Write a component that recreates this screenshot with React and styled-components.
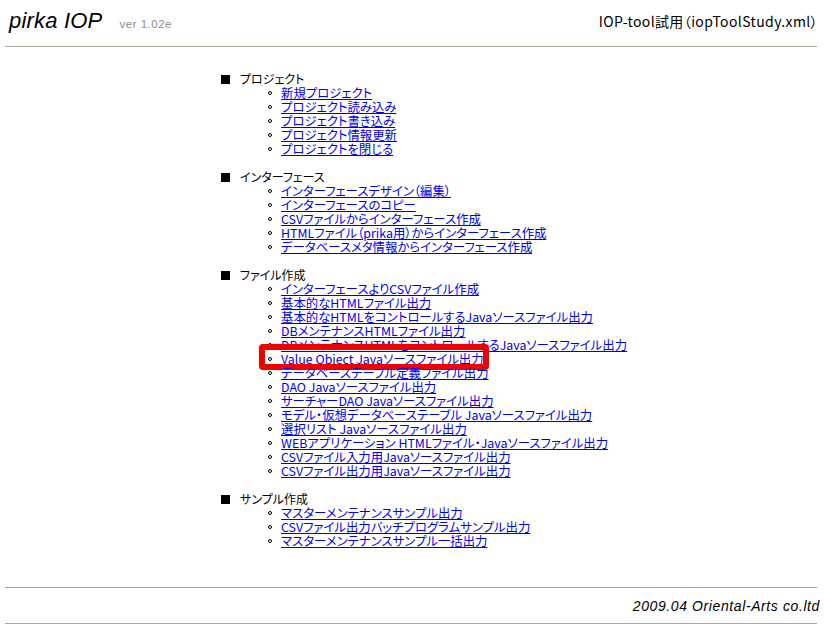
import React from "react";
import styled, { createGlobalStyle } from "styled-components";

const FONT = `"Noto Sans CJK JP", "Liberation Sans", sans-serif`;

const Global = createGlobalStyle`
  html, body { margin: 0; padding: 0; background: #fff; }
  body { font-family: ${FONT}; font-size: 13px; color: #000; font-feature-settings: "palt"; }
`;

const Page = styled.div`
  width: 824px;
  height: 631px;
  padding: 0 7px 0 5px;
  box-sizing: border-box;
  overflow: hidden;
`;

const Header = styled.header`
  height: 46px;
  display: flex;
  justify-content: space-between;
  align-items: flex-start;
`;

const Brand = styled.div`
  display: flex;
  align-items: baseline;
  padding: 8px 0 0 4px;
`;

const Logo = styled.span`
  font-family: "Liberation Sans", sans-serif;
  font-style: italic;
  font-size: 22px;
  line-height: 26px;
  letter-spacing: 0.2px;
`;

const Version = styled.span`
  margin-left: 17px;
  font-family: "Liberation Sans", sans-serif;
  font-size: 11.5px;
  color: #8c8c8c;
  letter-spacing: 0.5px;
`;

const ProjectName = styled.div`
  padding: 13px 0 0 0;
  margin-right: -1px;
  font-size: 14px;
  line-height: 17px;
  letter-spacing: 0.38px;
  white-space: nowrap;
`;

const Rule = styled.hr`
  margin: 0;
  border: 0;
  height: 1px;
  background: #aca899;
`;

const Menu = styled.main`
  height: 540px;
  padding: 25px 0 0 216px;
  box-sizing: border-box;
`;

const Section = styled.section`
  margin-bottom: 14px;
`;

const Heading = styled.h2`
  margin: 0;
  display: flex;
  align-items: center;
  gap: 10px;
  font-size: 12px;
  font-weight: 400;
  line-height: 14px;
  height: 14px;
  &::before {
    content: "";
    width: 9px;
    height: 9px;
    background: #000;
  }
`;

const Links = styled.ul`
  margin: 0;
  padding: 0 0 0 60px;
  list-style: none;
`;

const Item = styled.li`
  position: relative;
  height: 14px;
  line-height: 14px;
  white-space: nowrap;
  &::before {
    content: "";
    position: absolute;
    left: -13px;
    top: 5px;
    width: 2px;
    height: 2px;
    border: 1px solid #000;
    border-radius: 50%;
  }
`;

const Anchor = styled.a`
  display: inline-block;
  height: 14px;
  line-height: 14px;
  color: #0000ee;
  text-decoration: underline;
  font-size: 12.4px;
`;

const Highlight = styled.span`
  position: absolute;
  left: -22px;
  top: -8px;
  width: 230px;
  height: 26px;
  box-sizing: border-box;
  border: 6px solid #f00000;
  border-radius: 4px;
  pointer-events: none;
`;

const Footer = styled.footer`
  height: 35px;
  margin-right: -3px;
  display: flex;
  justify-content: flex-end;
  align-items: center;
  font-size: 14px;
  font-style: italic;
  letter-spacing: 0.6px;
  font-family: "Liberation Sans", ${FONT};
`;

const sections = [
  { title: "プロジェクト", links: ["新規プロジェクト", "プロジェクト読み込み", "プロジェクト書き込み", "プロジェクト情報更新", "プロジェクトを閉じる"] },
  { title: "インターフェース", links: ["インターフェースデザイン（編集）", "インターフェースのコピー", "CSVファイルからインターフェース作成", "HTMLファイル（prika用）からインターフェース作成", "データベースメタ情報からインターフェース作成"] },
  { title: "ファイル作成", links: [
    "インターフェースよりCSVファイル作成",
    "基本的なHTMLファイル出力",
    "基本的なHTMLをコントロールするJavaソースファイル出力",
    "DBメンテナンスHTMLファイル出力",
    "DBメンテナンスHTMLをコントロールするJavaソースファイル出力",
    "Value Object Javaソースファイル出力",
    "データベーステーブル定義ファイル出力",
    "DAO Javaソースファイル出力",
    "サーチャーDAO Javaソースファイル出力",
    "モデル・仮想データベーステーブル Javaソースファイル出力",
    "選択リスト Javaソースファイル出力",
    "WEBアプリケーション HTMLファイル・Javaソースファイル出力",
    "CSVファイル入力用Javaソースファイル出力",
    "CSVファイル出力用Javaソースファイル出力",
  ] },
  { title: "サンプル作成", links: ["マスターメンテナンスサンプル出力", "CSVファイル出力バッチプログラムサンプル出力", "マスターメンテナンスサンプル一括出力"] },
];

const HIGHLIGHTED = "Value Object Javaソースファイル出力";

export default function App() {
  return (
    <>
      <Global />
      <Page>
        <Header>
          <Brand>
            <Logo>pirka IOP</Logo>
            <Version>ver 1.02e</Version>
          </Brand>
          <ProjectName>IOP-tool試用（iopToolStudy.xml）</ProjectName>
        </Header>
        <Rule />
        <Menu>
          {sections.map((s) => (
            <Section key={s.title}>
              <Heading>{s.title}</Heading>
              <Links>
                {s.links.map((l) => (
                  <Item key={l}>
                    <Anchor href="#">{l}</Anchor>
                    {l === HIGHLIGHTED && <Highlight />}
                  </Item>
                ))}
              </Links>
            </Section>
          ))}
        </Menu>
        <Rule />
        <Footer>2009.04 Oriental-Arts co.ltd</Footer>
        <Rule />
      </Page>
    </>
  );
}
